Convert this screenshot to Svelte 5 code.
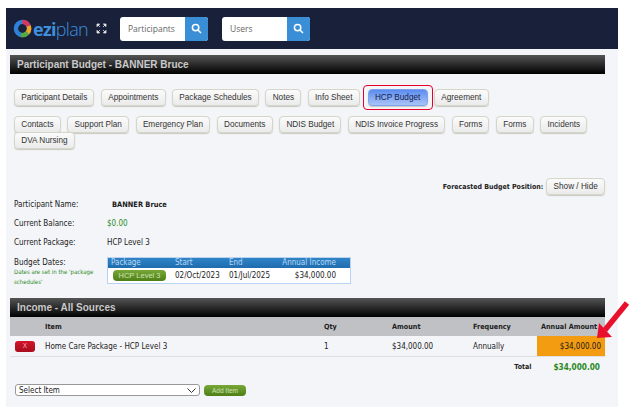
<script>
  const tabsTop = ['Participant Details', 'Appointments', 'Package Schedules', 'Notes', 'Info Sheet', 'HCP Budget', 'Agreement'];
  const tabsBottom = ['Contacts', 'Support Plan', 'Emergency Plan', 'Documents', 'NDIS Budget', 'NDIS Invoice Progress', 'Forms', 'Forms', 'Incidents', 'DVA Nursing'];
  const searches = ['Participants', 'Users'];
</script>

<div class="frame">
  <header class="topbar">
    <div class="logo">
      <svg width="19" height="19" viewBox="0 0 19 19">
        <circle cx="9.5" cy="9.5" r="6.6" fill="none" stroke="#2f80d8" stroke-width="4.4" />
        <path d="M9.5 2.9A6.6 6.6 0 0 1 15.6 7" fill="none" stroke="#d8365e" stroke-width="4.4" />
        <path d="M15.6 7A6.6 6.6 0 0 1 14.5 13.8" fill="none" stroke="#f0a51f" stroke-width="4.4" />
        <path d="M14.5 13.8A6.6 6.6 0 0 1 8 15.9" fill="none" stroke="#5aa83a" stroke-width="4.4" />
      </svg>
      <span class="wordmark"><b>ezi</b>plan</span>
    </div>
    <svg class="expand" width="11" height="11" viewBox="0 0 11 11" fill="#e8e8e8" stroke="#e8e8e8" stroke-width="0.8">
      <path d="M1 1h2.6L1 3.6zM10 1v2.6L7.4 1zM1 10V7.4L3.6 10zM10 10H7.4L10 7.4z" />
      <path d="M2 2l2 2M9 2L7 4M2 9l2-2M9 9L7 7" fill="none" />
    </svg>
    {#each searches as s}
      <div class="search">
        <span class="search-text">{s}</span>
        <span class="search-btn">
          <svg width="11" height="11" viewBox="0 0 11 11" fill="none" stroke="#fff" stroke-width="1.5">
            <circle cx="4.6" cy="4.6" r="3.2" />
            <path d="M7 7l3 3" />
          </svg>
        </span>
      </div>
    {/each}
  </header>

  <main class="content">
    <div class="bar">Participant Budget - BANNER Bruce</div>

    <div class="tabs first">
      {#each tabsTop as t}
        {#if t === 'HCP Budget'}
          <span class="highlight"><span class="btn active">{t}</span></span>
        {:else}
          <span class="btn">{t}</span>
        {/if}
      {/each}
    </div>
    <div class="tabs second">
      {#each tabsBottom as t}
        <span class="btn">{t}</span>
      {/each}
    </div>

    <div class="forecast">
      <span class="strong">Forecasted Budget Position:</span>
      <span class="btn">Show / Hide</span>
    </div>

    <div class="info">
      <div class="info-row"><span class="label">Participant Name:</span><span class="name">BANNER Bruce</span></div>
      <div class="info-row"><span class="label">Current Balance:</span><span class="green">$0.00</span></div>
      <div class="info-row"><span class="label">Current Package:</span><span>HCP Level 3</span></div>
      <div class="dates">
        <div class="dates-label">
          <span class="label">Budget Dates:</span>
          <small>Dates are set in the 'package schedules'</small>
        </div>
        <div class="mini">
          <div class="mini-head">
            <span>Package</span><span>Start</span><span>End</span><span class="right">Annual Income</span>
          </div>
          <div class="mini-body">
            <span class="pill">HCP Level 3</span><span>02/Oct/2023</span><span>01/Jul/2025</span><span class="right">$34,000.00</span>
          </div>
        </div>
      </div>
    </div>

    <div class="bar income">Income - All Sources</div>
    <div class="row head">
      <span></span><span>Item</span><span>Qty</span><span>Amount</span><span>Frequency</span><span class="annual-head">Annual Amount</span>
    </div>
    <div class="row item">
      <span><span class="delete">X</span></span>
      <span>Home Care Package - HCP Level 3</span>
      <span>1</span>
      <span>$34,000.00</span>
      <span>Annually</span>
      <span class="annual">$34,000.00</span>
    </div>
    <div class="total">
      <span class="strong">Total</span>
      <span class="total-value">$34,000.00</span>
    </div>

    <div class="add">
      <span class="select">Select Item
        <svg width="9" height="5" viewBox="0 0 9 5" fill="none" stroke="#333" stroke-width="1"><path d="M.5.5l4 4 4-4" /></svg>
      </span>
      <span class="pill add-btn">Add Item</span>
    </div>
  </main>

  <svg class="arrow" width="36" height="42" viewBox="0 0 36 42">
    <path d="M32 4L10 31" stroke="#e8112d" stroke-width="5.5" />
    <path d="M2 39L4 24 17 38z" fill="#e8112d" />
  </svg>
</div>

<style>
  :global(body) {
    background: #fff;
    font-family: "DejaVu Sans Condensed", "DejaVu Sans", sans-serif;
    font-stretch: condensed;
    font-size: 8px;
    color: #1b1b1b;
  }

  .frame {
    position: relative;
    width: 612px;
    margin: 8px 0 0 6px;
  }

  .topbar {
    height: 41px;
    background: #19213a;
    display: flex;
    align-items: center;
  }

  .logo {
    display: flex;
    align-items: center;
    gap: 1px;
    margin-left: 7px;
    width: 83px;
  }

  .wordmark {
    font-family: "Open Sans", sans-serif;
    font-stretch: normal;
    font-size: 18px;
    font-weight: 300;
    letter-spacing: -0.7px;
    color: #3f8fdc;
  }

  .wordmark b {
    font-weight: 700;
  }

  .search {
    width: 88px;
    height: 24px;
    background: #fff;
    border-radius: 3px;
    overflow: hidden;
    display: flex;
    align-items: center;
    justify-content: space-between;
    margin-left: 14px;
  }

  .expand + .search {
    margin-left: 13px;
  }

  .search-text {
    padding-left: 8px;
    font-family: "Open Sans", sans-serif;
    font-stretch: normal;
    font-size: 8.5px;
    color: #666;
  }

  .search-btn {
    width: 23px;
    height: 24px;
    background: #3a8ed6;
    display: flex;
    align-items: center;
    justify-content: center;
  }

  .content {
    background: #f4f5f8;
    height: 358px;
    padding: 6px 13px 0 4px;
    box-sizing: border-box;
  }

  .bar {
    height: 19px;
    line-height: 19px;
    padding-left: 7px;
    background: linear-gradient(#555, #000);
    color: #c9c9c9;
    font-family: "Liberation Sans", sans-serif;
    font-size: 10px;
    font-weight: 700;
    font-stretch: normal;
  }

  .tabs {
    display: flex;
    flex-wrap: wrap;
    align-items: center;
    padding-left: 4px;
    column-gap: 6.5px;
  }

  .tabs.first {
    margin-top: 15px;
  }

  .tabs.second {
    margin-top: 10px;
  }

  .tabs.second .btn {
    margin-bottom: -1px;
  }

  .btn {
    display: inline-block;
    height: 17px;
    line-height: 15px;
    box-sizing: border-box;
    padding: 0 6.25px;
    border: 1px solid #d5d5c8;
    border-radius: 4px;
    background: linear-gradient(#fbfbfb, #ebebeb);
    box-shadow: 0 1px 1px rgba(120, 120, 100, 0.35);
    font-family: "Liberation Sans", sans-serif;
    font-stretch: normal;
    font-size: 8.2px;
    color: #333;
    white-space: nowrap;
  }

  .highlight {
    margin: -4px -5px -4px -3.5px;
    padding: 3px 4px;
    border: 1px solid #e4002b;
    border-radius: 4px;
  }

  .btn.active {
    display: block;
    border-color: #7fa3ea;
    background: linear-gradient(#5b8cf0, #a9c3f8);
    color: #12204a;
  }

  .forecast {
    display: flex;
    justify-content: flex-end;
    align-items: center;
    gap: 3px;
    margin-top: 30px;
  }

  .strong {
    font-size: 7px;
    font-weight: 700;
    color: #222;
  }

  .info {
    margin: 0 0 0 4px;
  }

  .info-row {
    display: flex;
    height: 19px;
    align-items: center;
  }

  .label {
    width: 93px;
    flex: none;
  }

  .name {
    font-size: 7.4px;
    font-weight: 700;
    margin-left: 5px;
  }

  .green {
    color: #2a8a1e;
  }

  .dates {
    display: flex;
    align-items: flex-start;
    height: 28px;
    margin-top: 5px;
  }

  .dates-label {
    width: 93px;
    flex: none;
    display: flex;
    flex-direction: column;
    padding-top: 1px;
  }

  .dates-label small {
    font-size: 6px;
    line-height: 10px;
    color: #2a8a1e;
  }

  .mini {
    width: 244px;
    border: 1px solid #b9d2ef;
    box-sizing: border-box;
  }

  .mini-head,
  .mini-body {
    display: grid;
    grid-template-columns: 64px 54px 52px 1fr;
    align-items: center;
    padding: 0 14px 0 3px;
    white-space: nowrap;
  }

  .mini-head {
    height: 10px;
    line-height: 10px;
    background: linear-gradient(#2f84c8, #1f6cae);
    color: #b8d8f2;
  }

  .mini-body {
    height: 15px;
    background: #fff;
  }

  .right {
    text-align: right;
  }

  .pill {
    display: block;
    height: 11px;
    line-height: 11px;
    border-radius: 4px;
    background: linear-gradient(#78a838, #4d7f16);
    color: #cfe2b6;
    font-family: "Liberation Sans", sans-serif;
    font-stretch: normal;
    font-size: 7.5px;
    text-align: center;
    margin: 0 9px 0 2px;
  }

  .income {
    margin-top: 13px;
  }

  .row {
    display: grid;
    grid-template-columns: 35px 279px 68px 81px 64px 68px;
    align-items: center;
    height: 19px;
  }

  .row.head {
    background: #c0c1c5;
    font-size: 7.2px;
    font-weight: 700;
    color: #222;
  }

  .annual-head {
    margin-left: 4px;
    white-space: nowrap;
  }

  .row.item {
    height: 21px;
    border-bottom: 1px solid #dedfe2;
    box-sizing: border-box;
  }

  .delete {
    display: block;
    width: 20px;
    height: 11px;
    line-height: 11px;
    margin-left: 5px;
    border-radius: 3px;
    background: linear-gradient(#d3142a, #a80d1e);
    color: #f2a5ae;
    font-size: 7px;
    text-align: center;
  }

  .annual {
    align-self: stretch;
    display: flex;
    align-items: center;
    justify-content: flex-end;
    padding-right: 4px;
    background: #f39c12;
  }

  .total {
    display: flex;
    justify-content: flex-end;
    align-items: center;
    gap: 22px;
    height: 20px;
    padding-right: 5px;
  }

  .total-value {
    font-size: 8.2px;
    font-weight: 700;
    color: #2a8a1e;
  }

  .add {
    display: flex;
    align-items: center;
    gap: 4px;
    margin: 7px 0 0 5px;
  }

  .select {
    width: 185px;
    height: 12px;
    box-sizing: border-box;
    padding: 0 3px;
    background: #fff;
    border: 1px solid #999;
    border-radius: 3px;
    display: flex;
    align-items: center;
    justify-content: space-between;
  }

  .add-btn {
    width: 42px;
    margin: 0;
    font-size: 6.5px;
  }

  .arrow {
    position: absolute;
    left: 589px;
    top: 291px;
  }
</style>
